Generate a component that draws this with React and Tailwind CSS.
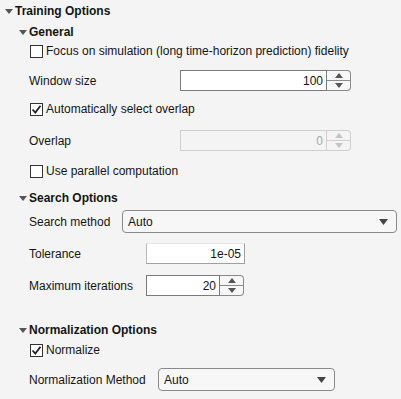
import React from "react";

const font = { fontFamily: '"Liberation Sans", Arial, sans-serif' };

function Tri({ color = "#555" }) {
  return (
    <svg width="8" height="5" viewBox="0 0 8 5" className="shrink-0">
      <path d="M0 0 L8 0 L4 5 Z" fill={color} />
    </svg>
  );
}

function Header({ children, indent }) {
  return (
    <div className={`flex items-center h-[18px] ${indent}`}>
      <Tri />
      <span className="ml-[2px] font-bold text-[12px] text-[#141414]">{children}</span>
    </div>
  );
}

function Checkbox({ checked, label, mt }) {
  return (
    <div className={`flex items-center h-[18px] pl-[30px] ${mt}`}>
      <div className="w-[13px] h-[13px] border border-[#333] bg-white flex items-center justify-center shrink-0">
        {checked && (
          <svg width="11" height="11" viewBox="0 0 11 11">
            <path d="M1.5 5.5 L4.3 8.5 L9.5 1.8" fill="none" stroke="#222" strokeWidth="1.8" />
          </svg>
        )}
      </div>
      <span className="ml-[3px] text-[12px] text-[#141414]">{label}</span>
    </div>
  );
}

function SpinArrows({ color }) {
  return (
    <div className="flex flex-col w-[23px] h-full">
      <div className="flex-1 flex items-center justify-center border-b" style={{ borderColor: color === "#555" ? "#8a8a8a" : "#d0d0d0" }}>
        <svg width="8" height="5" viewBox="0 0 8 5"><path d="M0 5 L8 5 L4 0 Z" fill={color} /></svg>
      </div>
      <div className="flex-1 flex items-center justify-center">
        <svg width="8" height="5" viewBox="0 0 8 5"><path d="M0 0 L8 0 L4 5 Z" fill={color} /></svg>
      </div>
    </div>
  );
}

function Spinner({ value, width, disabled }) {
  const border = disabled ? "border-[#cfcfcf]" : "border-[#7a7a7a]";
  return (
    <div className={`flex h-[21px] ${width}`}>
      <div className={`flex-1 border ${border} ${disabled ? "bg-[#f4f4f4] text-[#a8a8a8]" : "bg-white text-[#141414]"} flex items-center justify-end pr-[3px] text-[12px]`}>
        {value}
      </div>
      <div className={`border border-l-0 ${disabled ? "border-[#cfcfcf] bg-[#f4f4f4]" : "border-[#8a8a8a] bg-[#f7f7f7]"} rounded-r-[4px] flex`}>
        <SpinArrows color={disabled ? "#c4c4c4" : "#555"} />
      </div>
    </div>
  );
}

function Select({ width }) {
  return (
    <div className={`flex items-center h-[23px] ${width} border border-[#8a8a8a] rounded-[4px] bg-[#f7f7f7] pl-[5px] pr-[8px]`}>
      <span className="flex-1 text-[12px] text-[#141414]">Auto</span>
      <svg width="9" height="6" viewBox="0 0 9 6"><path d="M0 0 L9 0 L4.5 6 Z" fill="#444" /></svg>
    </div>
  );
}

function Label({ children, w }) {
  return <span className={`text-[12px] text-[#141414] shrink-0 ${w}`}>{children}</span>;
}

export default function App() {
  return (
    <div className="w-[401px] h-[399px] bg-[#f4f4f4] overflow-hidden" style={font}>
      <div className="flex flex-col">
        <div className="mt-[2px]"><Header indent="pl-[5px]">Training Options</Header></div>
        <div className="mt-[3px]"><Header indent="pl-[19px]">General</Header></div>
        <Checkbox mt="mt-[1px]" label="Focus on simulation (long time-horizon prediction) fidelity" />
        <div className="flex items-center mt-[10px] pl-[29px]">
          <Label w="w-[151px]">Window size</Label>
          <Spinner value="100" width="w-[171px]" />
        </div>
        <Checkbox checked mt="mt-[9px]" label="Automatically select overlap" />
        <div className="flex items-center mt-[12px] pl-[29px]">
          <Label w="w-[151px]">Overlap</Label>
          <Spinner value="0" width="w-[171px]" disabled />
        </div>
        <Checkbox mt="mt-[11px]" label="Use parallel computation" />
        <div className="mt-[9px]"><Header indent="pl-[19px]">Search Options</Header></div>
        <div className="flex items-center mt-[3px] pl-[29px]">
          <Label w="w-[93px]">Search method</Label>
          <Select width="w-[275px]" />
        </div>
        <div className="flex items-center mt-[10px] pl-[29px]">
          <Label w="w-[117px]">Tolerance</Label>
          <div className="w-[99px] h-[21px] bg-white border border-[#a0a0a0] border-t-[#e6e6e6] border-l-[#b8b8b8] flex items-center justify-end pr-[3px] text-[12px] text-[#141414]">1e-05</div>
        </div>
        <div className="flex items-center mt-[11px] pl-[29px]">
          <Label w="w-[117px]">Maximum iterations</Label>
          <Spinner value="20" width="w-[98px]" />
        </div>
        <div className="mt-[25px]"><Header indent="pl-[19px]">Normalization Options</Header></div>
        <Checkbox checked mt="mt-[2px]" label="Normalize" />
        <div className="flex items-center mt-[9px] pl-[29px]">
          <Label w="w-[129px]">Normalization Method</Label>
          <Select width="w-[177px]" />
        </div>
      </div>
    </div>
  );
}
